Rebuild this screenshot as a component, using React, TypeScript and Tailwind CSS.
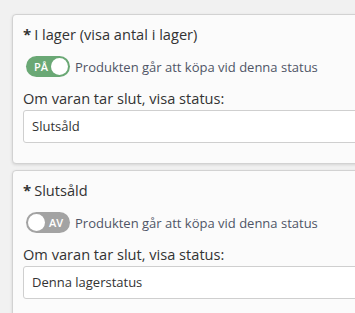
import React from "react";

function Toggle({ on }: { on: boolean }) {
  return (
    <div
      className={
        "relative ml-[3px] h-[21px] w-[44px] shrink-0 rounded-full " +
        (on ? "bg-[#6aa875]" : "bg-[#a3a3a3]")
      }
    >
      {on ? (
        <>
          <span className="absolute left-[8px] top-0 text-[11px] font-semibold leading-[21px] text-white">PÅ</span>
          <span className="absolute right-[2px] top-[2px] h-[17px] w-[17px] rounded-full bg-white" />
        </>
      ) : (
        <>
          <span className="absolute left-[2px] top-[2px] h-[17px] w-[17px] rounded-full bg-white" />
          <span className="absolute left-[23px] top-0 text-[11px] font-semibold leading-[21px] text-white">AV</span>
        </>
      )}
    </div>
  );
}

function Card({ title, on, value }: { title: string; on: boolean; value: string }) {
  return (
    <div className="w-[360px] rounded-[4px] border border-[#d2d2d2] bg-[#fbfbfb] px-[10px] pt-[8px] pb-[20px] shadow-[0_1px_3px_rgba(0,0,0,0.12)]">
      <div className="flex items-center text-[14.6px] leading-[22px] text-[#333]">
        <span className="mr-[3px] text-[15px] font-bold">*</span>
        <span>{title}</span>
      </div>
      <div className="mt-[11px] flex items-center">
        <Toggle on={on} />
        <span className="ml-[5px] whitespace-nowrap text-[13px] leading-[20px] text-[#4f5566]">
          Produkten går att köpa vid denna status
        </span>
      </div>
      <div className="mt-[10px] whitespace-nowrap text-[14.6px] leading-[22px] text-[#333]">
        Om varan tar slut, visa status:
      </div>
      <div className="mt-[1px] flex h-[33px] w-[340px] items-center rounded-[3px] border border-[#cfcfcf] bg-white px-[8px] text-[13px] text-[#333]">
        {value}
      </div>
    </div>
  );
}

export default function App() {
  return (
    <div
      className="h-[313px] w-[355px] overflow-hidden bg-[#f1f1f1] pl-[12px] pt-[14px]"
      style={{ fontFamily: '"Open Sans", sans-serif' }}
    >
      <div className="flex flex-col gap-[6px]">
        <Card title="I lager (visa antal i lager)" on={true} value="Slutsåld" />
        <Card title="Slutsåld" on={false} value="Denna lagerstatus" />
      </div>
    </div>
  );
}
